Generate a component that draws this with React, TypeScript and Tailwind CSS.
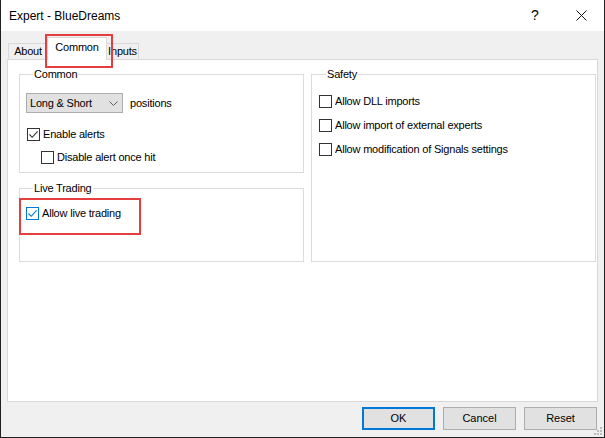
import React from 'react'

const font = { fontFamily: '"Liberation Sans", Arial, sans-serif' }

function Check({ checked = false, blue = false }: { checked?: boolean; blue?: boolean }) {
    return (
        <span className={`w-[13px] h-[13px] shrink-0 bg-white border flex items-center justify-center ${blue ? 'border-[#0078d7]' : 'border-[#333333]'}`}>
            {checked && (
                <svg width="11" height="11" viewBox="0 0 11 11">
                    <path d="M1.5 5.5 L4.2 8.3 L9.6 2.4" fill="none" stroke={blue ? '#0078d7' : '#333333'} strokeWidth="1.1" />
                </svg>
            )}
        </span>
    )
}

function CheckRow({ label, checked, blue, className = '' }: { label: string; checked?: boolean; blue?: boolean; className?: string }) {
    return (
        <label className={`flex items-center gap-[3px] h-[13px] ${className}`}>
            <Check checked={checked} blue={blue} />
            <span className="text-[11px] leading-[13px] tracking-[-0.2px] text-black">{label}</span>
        </label>
    )
}

function Group({ title, className = '', children }: { title: string; className?: string; children?: React.ReactNode }) {
    return (
        <fieldset className={`border border-[#dcdcdc] px-0 ${className}`}>
            <legend className="ml-[7px] px-[1px] text-[11px] leading-[14px] tracking-[-0.2px] text-black">{title}</legend>
            {children}
        </fieldset>
    )
}

export default function App() {
    return (
        <div className="relative w-[605px] h-[438px] flex flex-col bg-[#f0f0f0] border-x border-b border-[#202020] overflow-hidden select-none" style={font}>
            {/* Title bar */}
            <div className="h-[31px] shrink-0 bg-white flex items-center pl-[8px]">
                <span className="text-[12px] text-black">Expert - BlueDreams</span>
                <div className="flex-1" />
                <span className="w-[46px] text-center text-[14px] text-black">?</span>
                <span className="w-[46px] flex justify-center">
                    <svg width="11" height="11" viewBox="0 0 11 11">
                        <path d="M0.5 0.5 L10.5 10.5 M10.5 0.5 L0.5 10.5" stroke="#111" strokeWidth="1" />
                    </svg>
                </span>
            </div>

            {/* Body */}
            <div className="flex-1 flex flex-col pt-[6px] pl-[6px] pr-[6px] pb-[7px]">
                {/* Tabs */}
                <div className="flex items-end -mb-px pl-[1px] h-[23px] tracking-[-0.2px]">
                    <div className="h-[16px] mb-px w-[40px] border border-b-0 border-[#d9d9d9] bg-[#f0f0f0] text-[11px] leading-[15px] text-center text-black">About</div>
                    <div className="relative z-10 h-[23px] w-[60px] -ml-px border border-b-0 border-[#d9d9d9] bg-white text-[11px] leading-[18px] text-center text-black">Common</div>
                    <div className="h-[16px] mb-px w-[33px] -ml-px border border-b-0 border-[#d9d9d9] bg-[#f0f0f0] text-[11px] leading-[15px] text-center text-black">Inputs</div>
                </div>

                {/* Panel */}
                <div className="flex-1 bg-white border border-[#d9d9d9] pt-[7px] pl-[11px] pr-[1px] flex gap-[7px]">
                    <div className="w-[285px] flex flex-col gap-[8px]">
                        <Group title="Common" className="h-[106px] pl-[6px]">
                            <div className="flex items-center gap-[7px] mt-[12px]">
                                <div className="w-[97px] h-[20px] bg-[#e1e1e1] border border-[#adadad] flex items-center pl-[3px] pr-[4px]">
                                    <span className="text-[11px] tracking-[-0.2px] text-black flex-1">Long &amp; Short</span>
                                    <svg width="9" height="5" viewBox="0 0 9 5">
                                        <path d="M0.5 0.5 L4.5 4.5 L8.5 0.5" fill="none" stroke="#606060" strokeWidth="1" />
                                    </svg>
                                </div>
                                <span className="text-[11px] tracking-[-0.2px] text-black">positions</span>
                            </div>
                            <CheckRow label="Enable alerts" checked className="mt-[15px] ml-[1px]" />
                            <CheckRow label="Disable alert once hit" className="mt-[10px] ml-[15px]" />
                        </Group>
                        <Group title="Live Trading" className="h-[81px] pl-[6px]">
                            <CheckRow label="Allow live trading" checked blue className="mt-[12px]" />
                        </Group>
                    </div>
                    <Group title="Safety" className="w-[285px] h-[195px] pl-[7px]">
                        <div className="flex flex-col gap-[11px] mt-[14px]">
                            <CheckRow label="Allow DLL imports" />
                            <CheckRow label="Allow import of external experts" />
                            <CheckRow label="Allow modification of Signals settings" />
                        </div>
                    </Group>
                </div>

                {/* Buttons */}
                <div className="flex justify-end gap-[8px] mt-[5px] pr-[1px]">
                    <button className="w-[73px] h-[23px] bg-[#e1e1e1] border-2 border-[#0078d7] text-[11px] text-black">OK</button>
                    <button className="w-[73px] h-[23px] bg-[#e1e1e1] border border-[#adadad] text-[11px] text-black">Cancel</button>
                    <button className="w-[73px] h-[23px] bg-[#e1e1e1] border border-[#adadad] text-[11px] text-black">Reset</button>
                </div>
            </div>

            {/* Resize grip */}
            <svg className="absolute right-[1px] bottom-[1px]" width="10" height="10" viewBox="0 0 10 10">
                <g fill="#bcbcbc">
                    <rect x="7" y="1" width="2" height="2" />
                    <rect x="4" y="4" width="2" height="2" />
                    <rect x="7" y="4" width="2" height="2" />
                    <rect x="1" y="7" width="2" height="2" />
                    <rect x="4" y="7" width="2" height="2" />
                    <rect x="7" y="7" width="2" height="2" />
                </g>
            </svg>

            {/* Annotation highlights */}
            <div className="absolute left-[44px] top-[34px] w-[68px] h-[34px] border-2 border-[#e53e3e] z-20 pointer-events-none" />
            <div className="absolute left-[18px] top-[198px] w-[122px] h-[37px] border-2 border-[#e53e3e] z-20 pointer-events-none" />
        </div>
    )
}
